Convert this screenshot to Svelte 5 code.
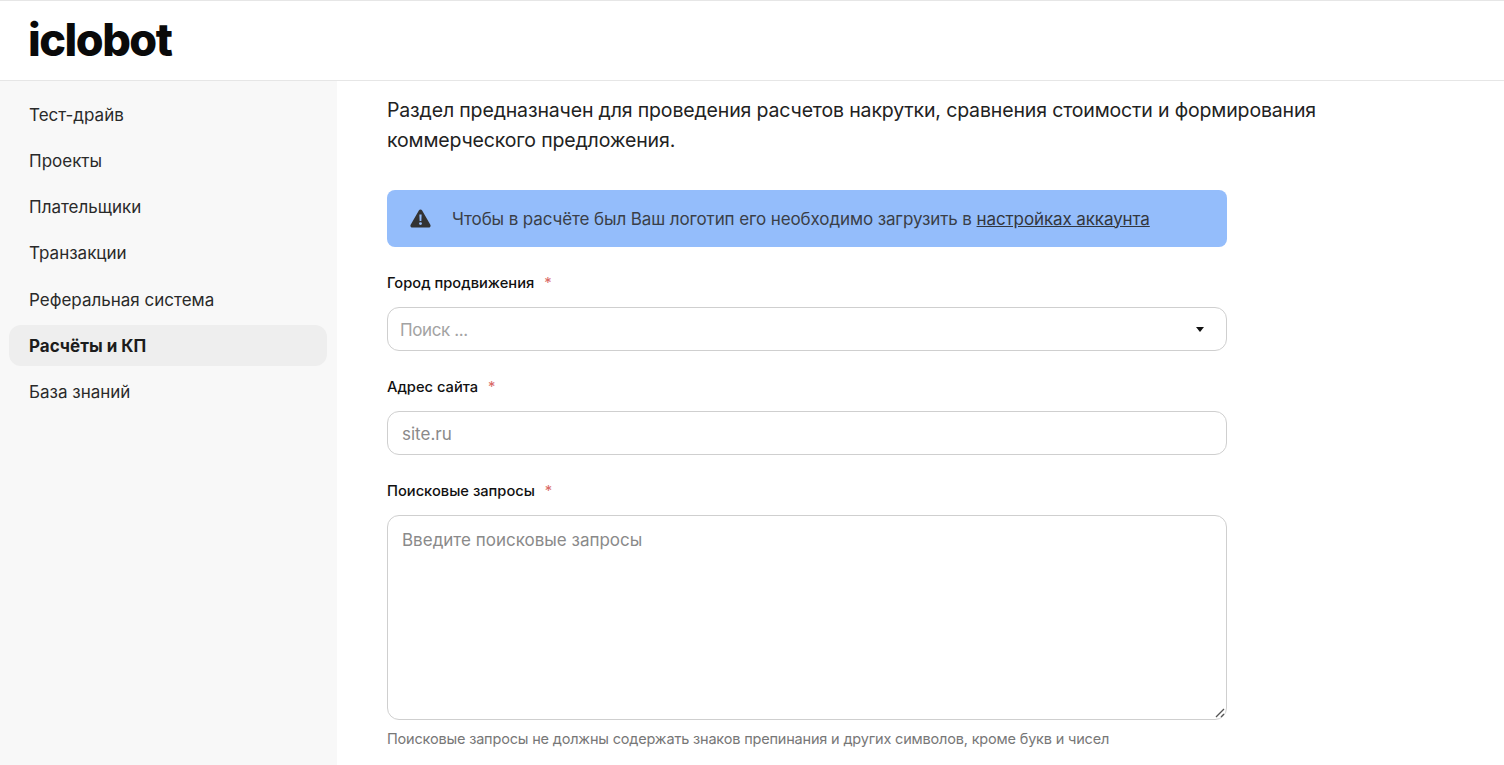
<script>
  const menu = [
    { label: 'Тест-драйв' },
    { label: 'Проекты' },
    { label: 'Плательщики' },
    { label: 'Транзакции' },
    { label: 'Реферальная система' },
    { label: 'Расчёты и КП', active: true },
    { label: 'База знаний' }
  ];
</script>

<div class="page">
  <header class="topbar">
    <span class="logo">iclobot</span>
  </header>

  <div class="body">
    <aside class="sidebar">
      <nav class="menu">
        {#each menu as item}
          <div class="menu-item" class:active={item.active}>{item.label}</div>
        {/each}
      </nav>
    </aside>

    <main class="content">
      <p class="intro">Раздел предназначен для проведения расчетов накрутки, сравнения стоимости и формирования коммерческого предложения.</p>

      <div class="form">
        <div class="notice">
          <svg class="notice-icon" viewBox="0 0 24 22" width="21" height="19">
            <path fill="#333" fill-rule="evenodd" d="M12 .6c.8 0 1.500.4 1.900 1.100l9.500 16.600c.8 1.500-.2 3.200-1.900 3.200H2.500C.8 21.500-.2 19.800.6 18.300L10.100 1.700C10.500 1 11.200.6 12 .6zM10.700 6.500l.3 7.500h2l.3-7.500h-2.600zM12 15.200a1.700 1.700 0 1 0 0 3.400 1.700 1.700 0 0 0 0-3.400z"/>
          </svg>
          <span>Чтобы в расчёте был Ваш логотип его необходимо загрузить в <a href="#settings">настройках аккаунта</a></span>
        </div>

        <div class="field">
          <div class="label">Город продвижения <span class="req">*</span></div>
          <div class="control select">
            <span class="select-text">Поиск ...</span>
            <span class="caret"></span>
          </div>
        </div>

        <div class="field">
          <div class="label">Адрес сайта <span class="req">*</span></div>
          <div class="control"><span class="placeholder">site.ru</span></div>
        </div>

        <div class="field">
          <div class="label">Поисковые запросы <span class="req">*</span></div>
          <div class="control area">
            <span class="placeholder">Введите поисковые запросы</span>
            <svg class="grip" viewBox="0 0 10 10" width="10" height="10">
              <path d="M1 9 9 1M6 9l3-3" stroke="#555" stroke-width="1.300" fill="none"/>
            </svg>
          </div>
          <div class="hint">Поисковые запросы не должны содержать знаков препинания и других символов, кроме букв и чисел</div>
        </div>
      </div>
    </main>
  </div>
</div>

<style>
  :global(body) {
    margin: 0;
    background: #fff;
    overflow: hidden;
  }

  .page {
    height: 765px;
    display: flex;
    flex-direction: column;
    font-family: Inter, "Open Sans", sans-serif;
    color: #222;
    overflow: hidden;
  }

  /* Header */
  .topbar {
    height: 79px;
    flex-shrink: 0;
    border-top: 1px solid #e6e6e6;
    border-bottom: 1px solid #e6e6e6;
    display: flex;
    align-items: center;
    padding-left: 28px;
  }
  .logo {
    font-family: Inter, sans-serif;
    font-weight: 800;
    font-size: 45px;
    line-height: 1;
    letter-spacing: -1.500px;
    color: #0a0a0a;
    margin-top: -2px;
  }

  .body {
    flex: 1;
    display: flex;
    min-height: 0;
  }

  /* Sidebar */
  .sidebar {
    width: 337px;
    flex-shrink: 0;
    background: #f8f8f8;
    padding: 13.100px 10px 0 9px;
    box-sizing: border-box;
  }
  .menu {
    display: flex;
    flex-direction: column;
    gap: 5.250px;
  }
  .menu-item {
    height: 41px;
    padding: 0 20px;
    display: flex;
    align-items: center;
    border-radius: 12px;
    font-size: 17px;
    color: #2a2a2a;
  }
  .menu-item.active {
    background: #eeeeee;
    font-weight: 700;
    color: #1c1c1c;
  }

  /* Content */
  .content {
    flex: 1;
    padding: 14px 0 0 50px;
    min-width: 0;
  }
  .intro {
    margin: 0 0 35px;
    width: 960px;
    font-size: 19.500px;
    letter-spacing: -0.15px;
    line-height: 30px;
    color: #222;
  }
  .form {
    width: 840px;
  }

  .notice {
    height: 57px;
    background: #94bdfb;
    border-radius: 8px;
    display: flex;
    align-items: center;
    gap: 21px;
    padding-left: 23px;
    font-size: 17px;
    letter-spacing: -0.11px;
    color: #3a3f48;
    margin-bottom: 25px;
  }
  .notice-icon { flex-shrink: 0; }
  .notice a {
    color: #33373e;
    text-decoration: underline;
  }

  .field {
    margin-bottom: 25px;
  }
  .label {
    font-size: 14.700px;
    font-weight: 500;
    line-height: 22px;
    color: #111;
    margin-bottom: 13px;
  }
  .req {
    color: #d96a66;
    font-weight: 400;
    margin-left: 6px;
  }
  .control {
    height: 44px;
    box-sizing: border-box;
    border: 1px solid #cfcfcf;
    border-radius: 12px;
    display: flex;
    align-items: center;
    padding: 1px 15px 0 14px;
    font-size: 17px;
    background: #fff;
  }
  .placeholder { color: #8a8a8a; }
  .select { padding-left: 12px; justify-content: space-between; padding-right: 22px; }
  .select-text { color: #a3a3a3; letter-spacing: -0.4px; }
  .caret {
    width: 0;
    height: 0;
    border-left: 4px solid transparent;
    border-right: 4px solid transparent;
    border-top: 5px solid #111;
  }
  .area {
    height: 205px;
    align-items: flex-start;
    padding-top: 14px;
    position: relative;
  }
  .grip {
    position: absolute;
    right: 1px;
    bottom: 1px;
  }
  .hint {
    margin-top: 9px;
    font-size: 14.500px;
    letter-spacing: -0.18px;
    line-height: 20px;
    color: #777;
  }
</style>
